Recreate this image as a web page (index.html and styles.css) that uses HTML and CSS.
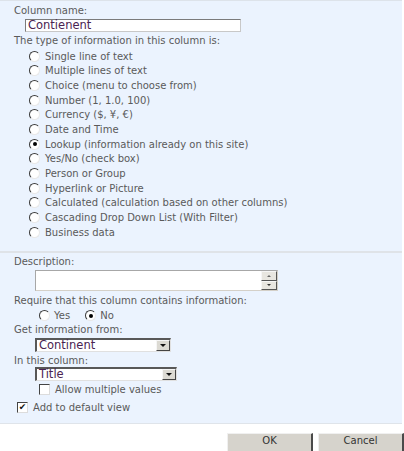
FILE: index.html
```html
<!DOCTYPE html>
<html>
<head>
<meta charset="utf-8">
<link rel="stylesheet" href="styles.css">
</head>
<body>
<div class="panel panel-top">
  <div class="label">Column name:</div>
  <div class="textbox">Contienent</div>
  <div class="label">The type of information in this column is:</div>
  <div class="radios">
    <div class="row"><span class="radio"></span>Single line of text</div>
    <div class="row"><span class="radio"></span>Multiple lines of text</div>
    <div class="row"><span class="radio"></span>Choice (menu to choose from)</div>
    <div class="row"><span class="radio"></span>Number (1, 1.0, 100)</div>
    <div class="row"><span class="radio"></span>Currency ($, ¥, €)</div>
    <div class="row"><span class="radio"></span>Date and Time</div>
    <div class="row"><span class="radio on"></span>Lookup (information already on this site)</div>
    <div class="row"><span class="radio"></span>Yes/No (check box)</div>
    <div class="row"><span class="radio"></span>Person or Group</div>
    <div class="row"><span class="radio"></span>Hyperlink or Picture</div>
    <div class="row"><span class="radio"></span>Calculated (calculation based on other columns)</div>
    <div class="row"><span class="radio"></span>Cascading Drop Down List (With Filter)</div>
    <div class="row"><span class="radio"></span>Business data</div>
  </div>
</div>
<div class="panel panel-bottom">
  <div class="label">Description:</div>
  <div class="textarea">
    <div class="ta-body"></div>
    <div class="ta-scroll">
      <span class="sbtn"><span class="arrow up"></span></span>
      <span class="sbtn"><span class="arrow down"></span></span>
    </div>
  </div>
  <div class="label label-req">Require that this column contains information:</div>
  <div class="yesno">
    <span class="radio"></span><span class="opt">Yes</span>
    <span class="radio on"></span><span>No</span>
  </div>
  <div class="label">Get information from:</div>
  <div class="select sel-continent"><span class="sel-text">Continent</span><span class="sel-btn"><span class="arrow down"></span></span></div>
  <div class="label label-col">In this column:</div>
  <div class="select sel-title"><span class="sel-text">Title</span><span class="sel-btn"><span class="arrow down"></span></span></div>
  <div class="check-row allow"><span class="check"></span>Allow multiple values</div>
  <div class="check-row add"><span class="check checked">&#10004;</span>Add to default view</div>
</div>
<div class="buttons">
  <button class="btn">OK</button>
  <button class="btn">Cancel</button>
</div>
</body>
</html>
```
FILE: styles.css
```css
html, body {
  margin: 0;
  padding: 0;
  background: #ffffff;
}
body {
  width: 404px;
  height: 451px;
  overflow: hidden;
  font-family: "DejaVu Sans", Verdana, sans-serif;
  font-size: 10px;
  color: #5a5a5a;
}
.panel {
  background: #ebf3fe;
  display: flex;
  flex-direction: column;
  align-items: flex-start;
  padding-left: 14px;
  box-sizing: border-box;
  width: 402px;
}
.panel-top {
  border-top: 1px solid #dde3ea;
  height: 251px;
  padding-top: 3px;
}
.panel-bottom {
  border-top: 2px solid #dfe3e8;
  height: 173px;
  padding-top: 2px;
  border-bottom: 1px solid #dfe4ea;
}
.label {
  line-height: 14px;
  height: 14px;
  white-space: nowrap;
}
.textbox {
  margin-left: 11px;
  width: 216px;
  height: 13px;
  box-sizing: border-box;
  background: #fff;
  border: 1px solid #7b7b7b;
  border-right-color: #c8c8c8;
  border-bottom-color: #c8c8c8;
  color: #4a2352;
  font-size: 11.5px;
  line-height: 11px;
  padding-left: 2px;
  margin-top: 1px;
  margin-bottom: 2px;
}
.radios {
  display: flex;
  flex-direction: column;
  margin-left: 15px;
  margin-top: 1px;
}
.row {
  display: flex;
  align-items: center;
  height: 14.67px;
  white-space: nowrap;
}
.radio {
  display: inline-block;
  width: 11px;
  height: 11px;
  box-sizing: border-box;
  border-radius: 50%;
  background: #fff;
  border: 1.5px solid #3a3a3a;
  border-right-color: #e8e8e8;
  border-bottom-color: #e8e8e8;
  margin-right: 5px;
  position: relative;
  flex: none;
}
.radio.on::after {
  content: "";
  position: absolute;
  left: 2.5px;
  top: 2.5px;
  width: 4px;
  height: 4px;
  border-radius: 50%;
  background: #000;
}
.textarea {
  margin-left: 21px;
  margin-top: 1px;
  width: 243px;
  height: 21px;
  box-sizing: border-box;
  display: flex;
  background: #fff;
  border: 1px solid #d4d0c8;
  border-top-color: #a7a7a7;
  border-left-color: #a7a7a7;
}
.ta-body {
  flex: 1;
}
.ta-scroll {
  width: 16px;
  display: flex;
  flex-direction: column;
}
.sbtn {
  flex: 1;
  background: #e8e6e0;
  border: 1px solid #f6f6f6;
  border-right-color: #555;
  border-bottom-color: #555;
  display: flex;
  align-items: center;
  justify-content: center;
}
.arrow {
  width: 0;
  height: 0;
  border-left: 2.5px solid transparent;
  border-right: 2.5px solid transparent;
}
.arrow.up {
  border-bottom: 2.5px solid #666;
}
.arrow.down {
  border-top: 2.5px solid #333;
}
.label-req {
  margin-top: 3px;
}
.yesno {
  display: flex;
  align-items: center;
  height: 15px;
  margin-left: 25px;
}
.yesno .opt {
  margin-right: 15px;
}
.yesno .radio {
  margin-right: 4px;
}
.select {
  margin-left: 21px;
  height: 14px;
  box-sizing: border-box;
  display: flex;
  background: #fff;
  border: 2px solid #585858;
  border-right-color: #e0e0e0;
  border-bottom-color: #e0e0e0;
  border-right-width: 1px;
  border-bottom-width: 1px;
  color: #4a2352;
  font-size: 11.5px;
  margin-top: 1px;
}
.sel-continent { width: 136px; }
.sel-title { width: 142px; }
.sel-text {
  flex: 1;
  line-height: 11px;
  padding-left: 2px;
}
.sel-btn {
  width: 14px;
  box-sizing: border-box;
  background: #dcdad3;
  border: 1px solid #f6f6f6;
  border-right-color: #444;
  border-bottom-color: #444;
  display: flex;
  align-items: center;
  justify-content: center;
}
.sel-btn .arrow.down {
  border-left-width: 3px;
  border-right-width: 3px;
  border-top-width: 3px;
  border-top-color: #111;
}
.label-col {
  margin-top: 2px;
  height: 12px;
  line-height: 13px;
}
.check-row {
  display: flex;
  align-items: center;
  height: 14px;
  white-space: nowrap;
}
.check {
  width: 11px;
  height: 11px;
  box-sizing: border-box;
  background: #fff;
  border: 1.5px solid #444;
  border-right-color: #dcdcdc;
  border-bottom-color: #dcdcdc;
  margin-right: 5px;
  font-size: 9px;
  line-height: 8px;
  text-align: center;
  color: #111;
  flex: none;
}
.allow {
  margin-left: 25px;
  margin-top: 1px;
}
.add {
  margin-left: 3px;
  margin-top: 4px;
}
.buttons {
  display: flex;
  justify-content: flex-end;
  gap: 5px;
  padding-top: 9px;
}
.btn {
  width: 86px;
  height: 20px;
  font-family: "DejaVu Sans", Verdana, sans-serif;
  font-size: 10px;
  color: #333;
  background: #d6d3cc;
  border: 1px solid #f0f0f0;
  border-right: 2px solid #4a4a4a;
  border-bottom: 2px solid #4a4a4a;
  padding: 0;
  padding-bottom: 4px;
  box-sizing: border-box;
}
```
